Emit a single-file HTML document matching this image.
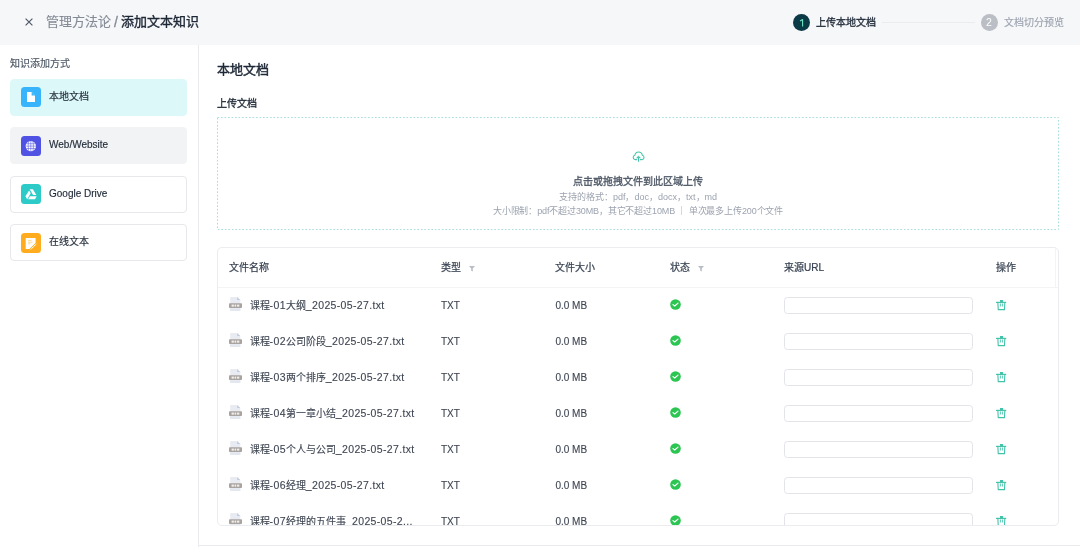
<!DOCTYPE html>
<html lang="zh-CN"><head><meta charset="utf-8">
<style>
*{box-sizing:border-box;margin:0;padding:0}
html,body{width:1080px;height:547px;overflow:hidden;background:#fff}
body{position:relative;font-family:"Liberation Sans",sans-serif;color:#1f2937}
.a{position:absolute;white-space:nowrap}
.m{-webkit-text-stroke:0.3px currentColor}
.ms{-webkit-text-stroke:0.15px currentColor}
.mb{-webkit-text-stroke:0.45px currentColor}
.g{will-change:transform}
.hdr{left:0;top:0;width:1080px;height:45px;background:#f6f7f9}
.t13{font-size:13px;line-height:16px}
.t10{font-size:10px;line-height:13px}
.t9{font-size:9px;line-height:11px}
.card{left:10px;width:177px;height:37px;border-radius:4px;border:1px solid #e6e8eb}
.ic{position:absolute;left:10px;top:7px;width:20px;height:20px;border-radius:3.5px}
.ic svg{position:absolute;left:0;top:0}
.lb{position:absolute;left:38px;top:10px;font-size:10px;line-height:13px;color:#1f2937}
.th{font-size:10px;line-height:13px;color:#374151;-webkit-text-stroke:0.22px currentColor}
.td{font-size:10px;line-height:13px;color:#3f4653;-webkit-text-stroke:0.12px currentColor}
.l{font-size:10.5px;letter-spacing:.35px}
.inp{position:absolute;left:566px;width:189px;height:17px;border:1px solid #e2e4e8;border-radius:3.5px;background:#fff}
</style></head>
<body>
<div id="root" style="position:absolute;left:0;top:0;width:1080px;height:547px;will-change:transform;background:#fff">
<div class="a hdr">
  <svg class="a" style="left:24.5px;top:17.5px" width="8" height="8" viewBox="0 0 8 8"><path d="M0.6 0.6L7.4 7.4M7.4 0.6L0.6 7.4" stroke="#4b5563" stroke-width="1.1" fill="none"/></svg>
  <div class="a t13 ms" style="left:46px;top:14.3px;color:#858b96">管理方法论</div>
  <div class="a t13 m" style="left:114px;top:14px;color:#858b96;font-size:14px">/</div>
  <div class="a t13" style="left:121px;top:14.3px;color:#1f2937;-webkit-text-stroke:0.38px #1f2937">添加文本知识</div>
  <svg class="a" style="left:793px;top:13.5px" width="17" height="17" viewBox="0 0 17 17"><circle cx="8.5" cy="8.5" r="8.5" fill="#0b3a47"/><path d="M7 6.9L9.6 5.5V12.5" stroke="#6ce5c4" stroke-width="1.1" fill="none" stroke-linejoin="round"/></svg>
  <div class="a t10" style="left:816px;top:15.5px;color:#1f2937;-webkit-text-stroke:0.3px #1f2937">上传本地文档</div>
  <div class="a" style="left:882px;top:22px;width:93px;height:1px;background:#eaecef"></div>
  <div class="a" style="left:980.5px;top:13.5px;width:17px;height:17px;border-radius:50%;background:#bbbec5;color:#fff;font-size:10.5px;line-height:17px;text-align:center">2</div>
  <div class="a t10 ms" style="left:1004px;top:15.5px;color:#9ca3af">文档切分预览</div>
</div>

<div class="a t10 ms" style="left:10px;top:57px;color:#4b5563">知识添加方式</div>

<div class="a card" style="top:79px;background:#dcf8f8;border-color:#dcf8f8">
  <div class="ic" style="background:#38b4fc"><svg width="20" height="20" viewBox="0 0 20 20"><path d="M6 5H10.6L14 8.4V15H6Z" fill="#fff"/><path d="M10.6 5V8.4H14" fill="#38b4fc"/></svg></div>
  <div class="lb ms">本地文档</div>
</div>
<div class="a card" style="top:127px;background:#f2f3f5;border-color:#f2f3f5">
  <div class="ic" style="top:8px;background:#4f52e3"><svg width="20" height="20" viewBox="0 0 20 20"><circle cx="9.8" cy="10.1" r="5.2" fill="#fff"/><path d="M4.6 10.1H15M5.3 7.7H14.3M5.3 12.5H14.3M9.8 4.9V15.3M7.7 5.4C7 8 7 12.2 7.7 14.8M11.9 5.4C12.6 8 12.6 12.2 11.9 14.8" stroke="#4f52e3" stroke-width="0.55" fill="none"/></svg></div>
  <div class="lb ms">Web/Website</div>
</div>
<div class="a card" style="top:176px">
  <div class="ic" style="background:#2ccbc8"><svg width="20" height="20" viewBox="0 0 20 20"><path d="M8.7 5.3H11.9L15.3 11.1H12.1Z" fill="#fff"/><path d="M8.1 6.4L9.7 9.2L6.2 15.2L4.4 12.3Z" fill="#fff"/><path d="M8.9 12.2H15.7L14 15.3H7.1Z" fill="#fff"/></svg></div>
  <div class="lb ms">Google Drive</div>
</div>
<div class="a card" style="top:224px">
  <div class="ic" style="top:8px;background:#ffad1f"><svg width="20" height="20" viewBox="0 0 20 20"><path d="M4.7 4.9H14.6V10.6L9.6 15.9H4.7Z" fill="#fff"/><path d="M7 7.4H10.6M7 9.2H11.6M7 10.8H9.4" stroke="#ffd68a" stroke-width="0.9"/><path d="M9.6 16.6L15.6 10.6" stroke="#ffad1f" stroke-width="2.4"/><path d="M9.8 16.4L15.4 10.8" stroke="#fff" stroke-width="1"/></svg></div>
  <div class="lb ms">在线文本</div>
</div>

<div class="a" style="left:198px;top:45px;width:1px;height:502px;background:#e8eaed"></div>
<div class="a" style="left:198px;top:545px;width:882px;height:1px;background:#e8eaed"></div>

<div class="a t13 mb" style="left:217px;top:62px;color:#1f2937">本地文档</div>
<div class="a t10 m" style="left:217px;top:97px;color:#1f2937">上传文档</div>

<svg class="a" style="left:217px;top:117px" width="842" height="113" viewBox="0 0 842 113"><rect x="0.5" y="0.5" width="841" height="112" fill="none" stroke="#aadfe0" stroke-width="1" stroke-dasharray="1.7 1.8"/></svg>
<svg class="a" style="left:631.5px;top:151px" width="14" height="12" viewBox="0 0 14 12"><path d="M4.6 8.6H3A2.25 2.25 0 0 1 2.9 4.2A3.75 3.75 0 0 1 10.3 4.2A2.25 2.25 0 0 1 10.2 8.6H8.4" stroke="#45c3aa" stroke-width="1.05" fill="none" stroke-linecap="round" stroke-linejoin="round"/><path d="M6.5 5.1L4.6 6.9H8.4Z" fill="#45c3aa" stroke="#45c3aa" stroke-width="0.6" stroke-linejoin="round"/><path d="M6.5 6.5V10.8" stroke="#45c3aa" stroke-width="1.1"/></svg>
<div class="a t10 m" style="left:217px;top:175px;width:842px;text-align:center;color:#4b5563">点击或拖拽文件到此区域上传</div>
<div class="a t9" style="left:217px;top:191.5px;width:842px;text-align:center;color:#9ca3af">支持的格式：pdf，doc，docx，txt，md</div>
<div class="a t9" style="left:217px;top:205.5px;width:842px;text-align:center;color:#9ca3af;letter-spacing:-0.13px">大小限制：pdf不超过30MB，其它不超过10MB ｜ 单次最多上传200个文件</div>

<div class="a" style="left:217px;top:247px;width:842px;height:279px;border:1px solid #eaecef;border-radius:5px;overflow:hidden">
<div class="a th" style="left:11px;top:13.3px">文件名称</div>
<div class="a th" style="left:223px;top:13.3px">类型</div>
<div class="a th" style="left:337.4px;top:13.3px">文件大小</div>
<div class="a th" style="left:452.4px;top:13.3px">状态</div>
<div class="a th" style="left:566px;top:13.3px">来源URL</div>
<div class="a th" style="left:778px;top:13.3px">操作</div>
<svg class="a" style="left:251.2px;top:18px" width="6" height="6" viewBox="0 0 6 6"><path d="M0 0H6L3.8 2.6V5.6L2.2 4.8V2.6Z" fill="#b9bdc5"/></svg>
<svg class="a" style="left:479.8px;top:18px" width="6" height="6" viewBox="0 0 6 6"><path d="M0 0H6L3.8 2.6V5.6L2.2 4.8V2.6Z" fill="#b9bdc5"/></svg>
<div class="a" style="left:0;top:39px;width:840px;height:1px;background:#f3f4f6"></div>
<div class="a" style="left:837px;top:0;width:1px;height:39px;background:#f3f4f6"></div>
<svg class="a" style="left:11px;top:48.8px" width="14" height="14" viewBox="0 0 14 14"><path d="M1.2 0H8.2L11.3 3.1V14H1.2Z" fill="#e8ebf1"/><path d="M8.2 0L11.3 3.1H8.2Z" fill="#c3cbdc"/><rect x="0" y="6.2" width="13" height="4.8" rx="0.8" fill="#aaa4a1"/><rect x="2.6" y="7.6" width="2.2" height="2" fill="#f4f2f1"/><rect x="5.6" y="7.6" width="1.6" height="2" fill="#f4f2f1"/><rect x="8.1" y="7.6" width="2.2" height="2" fill="#f4f2f1"/><rect x="1.2" y="11.6" width="10.1" height="2.4" fill="#e3e8f0"/></svg>
<div class="a td" style="left:31.6px;top:50.5px">课程<span class="l">-01</span>大纲<span class="l">_2025-05-27.txt</span></div>
<div class="a td" style="left:223px;top:51px">TXT</div>
<div class="a td" style="left:337.4px;top:51px">0.0 MB</div>
<svg class="a" style="left:452.2px;top:51.3px" width="11" height="11" viewBox="0 0 11 11"><circle cx="5.5" cy="5.5" r="5.3" fill="#2ac651"/><path d="M3 5.6L4.7 7L8 4.1" stroke="#fff" stroke-width="1.2" fill="none" stroke-linecap="round" stroke-linejoin="round"/></svg>
<div class="inp" style="top:48.5px"></div>
<svg class="a" style="left:778.1px;top:51.9px" width="11" height="11" viewBox="0 0 11 11"><rect x="4" y="0" width="3.1" height="2.2" fill="#45c3aa"/><rect x="0" y="1.8" width="10.2" height="1.2" fill="#45c3aa"/><path d="M1.85 2.6L2.25 9.6H8.45L8.85 2.6" stroke="#45c3aa" stroke-width="1.1" fill="none"/><path d="M4.4 3.9V6.1M6.4 3.9V6.1" stroke="#45c3aa" stroke-width="0.9" stroke-linecap="round"/></svg>
<svg class="a" style="left:11px;top:84.8px" width="14" height="14" viewBox="0 0 14 14"><path d="M1.2 0H8.2L11.3 3.1V14H1.2Z" fill="#e8ebf1"/><path d="M8.2 0L11.3 3.1H8.2Z" fill="#c3cbdc"/><rect x="0" y="6.2" width="13" height="4.8" rx="0.8" fill="#aaa4a1"/><rect x="2.6" y="7.6" width="2.2" height="2" fill="#f4f2f1"/><rect x="5.6" y="7.6" width="1.6" height="2" fill="#f4f2f1"/><rect x="8.1" y="7.6" width="2.2" height="2" fill="#f4f2f1"/><rect x="1.2" y="11.6" width="10.1" height="2.4" fill="#e3e8f0"/></svg>
<div class="a td" style="left:31.6px;top:86.5px">课程<span class="l">-02</span>公司阶段<span class="l">_2025-05-27.txt</span></div>
<div class="a td" style="left:223px;top:87px">TXT</div>
<div class="a td" style="left:337.4px;top:87px">0.0 MB</div>
<svg class="a" style="left:452.2px;top:87.3px" width="11" height="11" viewBox="0 0 11 11"><circle cx="5.5" cy="5.5" r="5.3" fill="#2ac651"/><path d="M3 5.6L4.7 7L8 4.1" stroke="#fff" stroke-width="1.2" fill="none" stroke-linecap="round" stroke-linejoin="round"/></svg>
<div class="inp" style="top:84.5px"></div>
<svg class="a" style="left:778.1px;top:87.9px" width="11" height="11" viewBox="0 0 11 11"><rect x="4" y="0" width="3.1" height="2.2" fill="#45c3aa"/><rect x="0" y="1.8" width="10.2" height="1.2" fill="#45c3aa"/><path d="M1.85 2.6L2.25 9.6H8.45L8.85 2.6" stroke="#45c3aa" stroke-width="1.1" fill="none"/><path d="M4.4 3.9V6.1M6.4 3.9V6.1" stroke="#45c3aa" stroke-width="0.9" stroke-linecap="round"/></svg>
<svg class="a" style="left:11px;top:120.8px" width="14" height="14" viewBox="0 0 14 14"><path d="M1.2 0H8.2L11.3 3.1V14H1.2Z" fill="#e8ebf1"/><path d="M8.2 0L11.3 3.1H8.2Z" fill="#c3cbdc"/><rect x="0" y="6.2" width="13" height="4.8" rx="0.8" fill="#aaa4a1"/><rect x="2.6" y="7.6" width="2.2" height="2" fill="#f4f2f1"/><rect x="5.6" y="7.6" width="1.6" height="2" fill="#f4f2f1"/><rect x="8.1" y="7.6" width="2.2" height="2" fill="#f4f2f1"/><rect x="1.2" y="11.6" width="10.1" height="2.4" fill="#e3e8f0"/></svg>
<div class="a td" style="left:31.6px;top:122.5px">课程<span class="l">-03</span>两个排序<span class="l">_2025-05-27.txt</span></div>
<div class="a td" style="left:223px;top:123px">TXT</div>
<div class="a td" style="left:337.4px;top:123px">0.0 MB</div>
<svg class="a" style="left:452.2px;top:123.3px" width="11" height="11" viewBox="0 0 11 11"><circle cx="5.5" cy="5.5" r="5.3" fill="#2ac651"/><path d="M3 5.6L4.7 7L8 4.1" stroke="#fff" stroke-width="1.2" fill="none" stroke-linecap="round" stroke-linejoin="round"/></svg>
<div class="inp" style="top:120.5px"></div>
<svg class="a" style="left:778.1px;top:123.9px" width="11" height="11" viewBox="0 0 11 11"><rect x="4" y="0" width="3.1" height="2.2" fill="#45c3aa"/><rect x="0" y="1.8" width="10.2" height="1.2" fill="#45c3aa"/><path d="M1.85 2.6L2.25 9.6H8.45L8.85 2.6" stroke="#45c3aa" stroke-width="1.1" fill="none"/><path d="M4.4 3.9V6.1M6.4 3.9V6.1" stroke="#45c3aa" stroke-width="0.9" stroke-linecap="round"/></svg>
<svg class="a" style="left:11px;top:156.8px" width="14" height="14" viewBox="0 0 14 14"><path d="M1.2 0H8.2L11.3 3.1V14H1.2Z" fill="#e8ebf1"/><path d="M8.2 0L11.3 3.1H8.2Z" fill="#c3cbdc"/><rect x="0" y="6.2" width="13" height="4.8" rx="0.8" fill="#aaa4a1"/><rect x="2.6" y="7.6" width="2.2" height="2" fill="#f4f2f1"/><rect x="5.6" y="7.6" width="1.6" height="2" fill="#f4f2f1"/><rect x="8.1" y="7.6" width="2.2" height="2" fill="#f4f2f1"/><rect x="1.2" y="11.6" width="10.1" height="2.4" fill="#e3e8f0"/></svg>
<div class="a td" style="left:31.6px;top:158.5px">课程<span class="l">-04</span>第一章小结<span class="l">_2025-05-27.txt</span></div>
<div class="a td" style="left:223px;top:159px">TXT</div>
<div class="a td" style="left:337.4px;top:159px">0.0 MB</div>
<svg class="a" style="left:452.2px;top:159.3px" width="11" height="11" viewBox="0 0 11 11"><circle cx="5.5" cy="5.5" r="5.3" fill="#2ac651"/><path d="M3 5.6L4.7 7L8 4.1" stroke="#fff" stroke-width="1.2" fill="none" stroke-linecap="round" stroke-linejoin="round"/></svg>
<div class="inp" style="top:156.5px"></div>
<svg class="a" style="left:778.1px;top:159.9px" width="11" height="11" viewBox="0 0 11 11"><rect x="4" y="0" width="3.1" height="2.2" fill="#45c3aa"/><rect x="0" y="1.8" width="10.2" height="1.2" fill="#45c3aa"/><path d="M1.85 2.6L2.25 9.6H8.45L8.85 2.6" stroke="#45c3aa" stroke-width="1.1" fill="none"/><path d="M4.4 3.9V6.1M6.4 3.9V6.1" stroke="#45c3aa" stroke-width="0.9" stroke-linecap="round"/></svg>
<svg class="a" style="left:11px;top:192.8px" width="14" height="14" viewBox="0 0 14 14"><path d="M1.2 0H8.2L11.3 3.1V14H1.2Z" fill="#e8ebf1"/><path d="M8.2 0L11.3 3.1H8.2Z" fill="#c3cbdc"/><rect x="0" y="6.2" width="13" height="4.8" rx="0.8" fill="#aaa4a1"/><rect x="2.6" y="7.6" width="2.2" height="2" fill="#f4f2f1"/><rect x="5.6" y="7.6" width="1.6" height="2" fill="#f4f2f1"/><rect x="8.1" y="7.6" width="2.2" height="2" fill="#f4f2f1"/><rect x="1.2" y="11.6" width="10.1" height="2.4" fill="#e3e8f0"/></svg>
<div class="a td" style="left:31.6px;top:194.5px">课程<span class="l">-05</span>个人与公司<span class="l">_2025-05-27.txt</span></div>
<div class="a td" style="left:223px;top:195px">TXT</div>
<div class="a td" style="left:337.4px;top:195px">0.0 MB</div>
<svg class="a" style="left:452.2px;top:195.3px" width="11" height="11" viewBox="0 0 11 11"><circle cx="5.5" cy="5.5" r="5.3" fill="#2ac651"/><path d="M3 5.6L4.7 7L8 4.1" stroke="#fff" stroke-width="1.2" fill="none" stroke-linecap="round" stroke-linejoin="round"/></svg>
<div class="inp" style="top:192.5px"></div>
<svg class="a" style="left:778.1px;top:195.9px" width="11" height="11" viewBox="0 0 11 11"><rect x="4" y="0" width="3.1" height="2.2" fill="#45c3aa"/><rect x="0" y="1.8" width="10.2" height="1.2" fill="#45c3aa"/><path d="M1.85 2.6L2.25 9.6H8.45L8.85 2.6" stroke="#45c3aa" stroke-width="1.1" fill="none"/><path d="M4.4 3.9V6.1M6.4 3.9V6.1" stroke="#45c3aa" stroke-width="0.9" stroke-linecap="round"/></svg>
<svg class="a" style="left:11px;top:228.8px" width="14" height="14" viewBox="0 0 14 14"><path d="M1.2 0H8.2L11.3 3.1V14H1.2Z" fill="#e8ebf1"/><path d="M8.2 0L11.3 3.1H8.2Z" fill="#c3cbdc"/><rect x="0" y="6.2" width="13" height="4.8" rx="0.8" fill="#aaa4a1"/><rect x="2.6" y="7.6" width="2.2" height="2" fill="#f4f2f1"/><rect x="5.6" y="7.6" width="1.6" height="2" fill="#f4f2f1"/><rect x="8.1" y="7.6" width="2.2" height="2" fill="#f4f2f1"/><rect x="1.2" y="11.6" width="10.1" height="2.4" fill="#e3e8f0"/></svg>
<div class="a td" style="left:31.6px;top:230.5px">课程<span class="l">-06</span>经理<span class="l">_2025-05-27.txt</span></div>
<div class="a td" style="left:223px;top:231px">TXT</div>
<div class="a td" style="left:337.4px;top:231px">0.0 MB</div>
<svg class="a" style="left:452.2px;top:231.3px" width="11" height="11" viewBox="0 0 11 11"><circle cx="5.5" cy="5.5" r="5.3" fill="#2ac651"/><path d="M3 5.6L4.7 7L8 4.1" stroke="#fff" stroke-width="1.2" fill="none" stroke-linecap="round" stroke-linejoin="round"/></svg>
<div class="inp" style="top:228.5px"></div>
<svg class="a" style="left:778.1px;top:231.9px" width="11" height="11" viewBox="0 0 11 11"><rect x="4" y="0" width="3.1" height="2.2" fill="#45c3aa"/><rect x="0" y="1.8" width="10.2" height="1.2" fill="#45c3aa"/><path d="M1.85 2.6L2.25 9.6H8.45L8.85 2.6" stroke="#45c3aa" stroke-width="1.1" fill="none"/><path d="M4.4 3.9V6.1M6.4 3.9V6.1" stroke="#45c3aa" stroke-width="0.9" stroke-linecap="round"/></svg>
<svg class="a" style="left:11px;top:264.8px" width="14" height="14" viewBox="0 0 14 14"><path d="M1.2 0H8.2L11.3 3.1V14H1.2Z" fill="#e8ebf1"/><path d="M8.2 0L11.3 3.1H8.2Z" fill="#c3cbdc"/><rect x="0" y="6.2" width="13" height="4.8" rx="0.8" fill="#aaa4a1"/><rect x="2.6" y="7.6" width="2.2" height="2" fill="#f4f2f1"/><rect x="5.6" y="7.6" width="1.6" height="2" fill="#f4f2f1"/><rect x="8.1" y="7.6" width="2.2" height="2" fill="#f4f2f1"/><rect x="1.2" y="11.6" width="10.1" height="2.4" fill="#e3e8f0"/></svg>
<div class="a td" style="left:31.6px;top:266.5px">课程<span class="l">-07</span>经理的五件事<span class="l">_2025-05-2...</span></div>
<div class="a td" style="left:223px;top:267px">TXT</div>
<div class="a td" style="left:337.4px;top:267px">0.0 MB</div>
<svg class="a" style="left:452.2px;top:267.3px" width="11" height="11" viewBox="0 0 11 11"><circle cx="5.5" cy="5.5" r="5.3" fill="#2ac651"/><path d="M3 5.6L4.7 7L8 4.1" stroke="#fff" stroke-width="1.2" fill="none" stroke-linecap="round" stroke-linejoin="round"/></svg>
<div class="inp" style="top:264.5px"></div>
<svg class="a" style="left:778.1px;top:267.9px" width="11" height="11" viewBox="0 0 11 11"><rect x="4" y="0" width="3.1" height="2.2" fill="#45c3aa"/><rect x="0" y="1.8" width="10.2" height="1.2" fill="#45c3aa"/><path d="M1.85 2.6L2.25 9.6H8.45L8.85 2.6" stroke="#45c3aa" stroke-width="1.1" fill="none"/><path d="M4.4 3.9V6.1M6.4 3.9V6.1" stroke="#45c3aa" stroke-width="0.9" stroke-linecap="round"/></svg>
</div>
</div>
</body></html>
